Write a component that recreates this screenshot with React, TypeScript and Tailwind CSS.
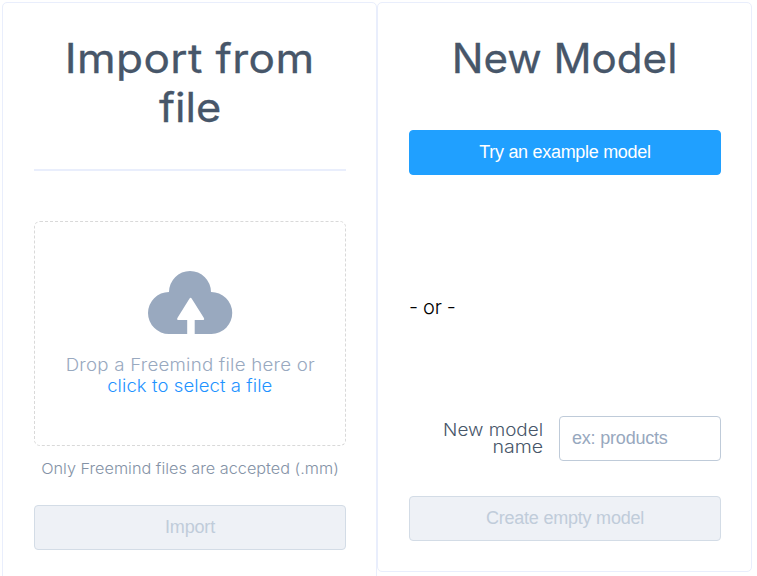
const heading = "flex flex-col items-center text-[40.5px] font-normal leading-[49px] text-[#475669] [-webkit-text-stroke:0.3px_#475669]";
const card = "w-[375px] shrink-0 rounded-[5px] border border-[#e9eefc] pl-[31px] pr-[30px]";
const button = "block h-[45px] w-full rounded-[4px] border font-['Liberation_Sans',sans-serif] text-[18px]";
const disabled = "border-[#d3dce6] bg-[#eef1f6] text-[#c0ccda]";

function CloudUpload() {
  return (
    <svg className="mt-[49px] h-[63px] w-[85px]" viewBox="0 0 85 63" fill="#99a9bf" aria-hidden="true">
      <path d="M21 21A21 21 0 0 1 63 21A21 21 0 0 1 63.5 63H46.7V49H54.2Q57.3 49 55.6 46.4L43.8 27.7Q42.6 26 41.4 27.7L29.7 46.4Q28 49 31.1 49H39.2V63H21A21 21 0 0 1 21 21Z" />
    </svg>
  );
}

export default function App() {
  return (
    <main className="flex h-[576px] w-[757px] items-start overflow-hidden bg-white pl-[2px] pt-[2px] font-['Inter',sans-serif]">
      <section className={`${card} h-[580px]`}>
        <h1 className={`${heading} pt-[31px]`}>
          <span className="scale-x-[1.09] whitespace-nowrap tracking-[0.35px]">Import from</span>
          <span className="scale-x-[1.07]">file</span>
        </h1>
        <hr className="mt-[37px] border-t-2 border-[#e9eefc]" />
        <div className="mt-[50px] flex h-[225px] w-[312px] flex-col items-center rounded-[6px] border border-dashed border-[#d9d9d9] text-[17px] font-light leading-[21px] text-[#99a9bf]">
          <CloudUpload />
          <p className="mt-[21px] flex flex-col items-center whitespace-nowrap">
            <span className="scale-x-[1.1] tracking-[0.2px]">Drop a Freemind file here or</span>
            <span className="scale-x-[1.09] text-[#1f93ff] tracking-[0.07px]">click to select a file</span>
          </p>
        </div>
        <p className="mt-[13px] scale-x-[1.083] whitespace-nowrap text-center text-[15px] font-light leading-[20px] text-[#8492a6]">
          Only Freemind files are accepted (.mm)
        </p>
        <button className={`${button} ${disabled} mt-[26px] tracking-[-0.15px]`} disabled>Import</button>
      </section>
      <section className={`${card} h-[570px]`}>
        <h1 className={`${heading} pt-[31px]`}>
          <span className="scale-x-[1.04] whitespace-nowrap">New Model</span>
        </h1>
        <button className={`${button} mt-[47px] border-[#20a0ff] bg-[#20a0ff] tracking-[-0.3px] text-white`}>Try an example model</button>
        <p className="mt-[120px] text-[20px] font-light leading-[24px] tracking-[-0.3px] text-black">- or -</p>
        <div className="mt-[97px] flex h-[45px] items-center">
          <label htmlFor="model-name" className="flex w-[134px] flex-col items-end whitespace-nowrap text-[17px] font-light leading-[17px] text-[#475669]">
            <span className="origin-right scale-x-[1.11]">New model</span>
            <span className="origin-right scale-x-[1.15]">name</span>
          </label>
          <input
            id="model-name"
            placeholder="ex: products"
            className="ml-[16px] h-[45px] w-[162px] rounded-[4px] border border-[#bfcbd9] bg-white px-3 font-['Liberation_Sans',sans-serif] text-[18px] tracking-[-0.2px] outline-none placeholder:text-[#97a8be]"
          />
        </div>
        <button className={`${button} ${disabled} mt-[35px] tracking-[-0.22px]`} disabled>Create empty model</button>
      </section>
    </main>
  );
}
